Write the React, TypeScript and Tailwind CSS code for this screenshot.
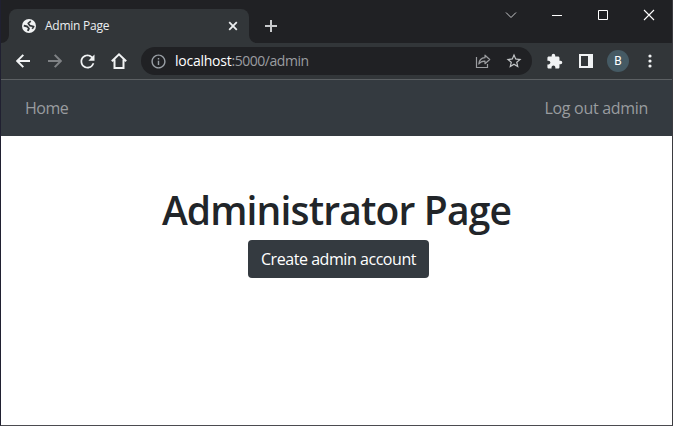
import type { ReactNode } from "react";
import { MdRefresh, MdExtension, MdStarBorder, MdInfoOutline } from "react-icons/md";

function Cell({ children }: { children: ReactNode }) {
  return <div className="flex h-8 w-8 shrink-0 items-center justify-center">{children}</div>;
}

function WindowButton({ children }: { children: ReactNode }) {
  return (
    <button className="flex h-[30px] w-[46px] shrink-0 items-center justify-center">
      <svg width="12" height="12" viewBox="0 0 12 12" fill="none" stroke="currentColor">
        {children}
      </svg>
    </button>
  );
}

function Globe() {
  return (
    <svg width="14" height="14" viewBox="0 0 14 14" fill="none" stroke="#323639">
      <circle cx="7" cy="7" r="7" fill="#f1f3f4" stroke="none" />
      <path d="M8.800 2.200L6.200 4.300l1.600 2.300 3.900.9-1.500 2.300" strokeWidth="1.700" strokeLinejoin="round" />
      <path d="M1.800 6.600l3.400.9 1.700 2-1.100 2.300" strokeWidth="1.900" strokeLinejoin="round" />
    </svg>
  );
}

function TitleBar() {
  return (
    <div className="flex h-[43px] bg-[#202124]">
      <svg className="shrink-0 self-end" width="8" height="8" viewBox="0 0 8 8">
        <path d="M8 0v8H0a8 8 0 0 0 8-8z" fill="#323639" />
      </svg>
      <div className="mt-[9px] flex h-[34px] w-[240px] shrink-0 items-center rounded-t-lg bg-[#323639] pl-[13px] pr-[11px] text-[#eceef0]">
        <Globe />
        <span className="ml-[9px] flex-1 whitespace-nowrap text-[12px] leading-4 tracking-[-0.25px]">Admin Page</span>
        <svg width="10" height="10" viewBox="0 0 10 10" stroke="currentColor" strokeWidth="1.8">
          <path d="M1.200 1.200l7.600 7.600M8.800 1.200L1.200 8.800" />
        </svg>
      </div>
      <svg className="shrink-0 self-end" width="8" height="8" viewBox="0 0 8 8">
        <path d="M0 0v8h8a8 8 0 0 1-8-8z" fill="#323639" />
      </svg>
      <svg className="ml-2 mt-5 shrink-0" width="12" height="12" viewBox="0 0 12 12" stroke="#c8cacc" strokeWidth="2">
        <path d="M6 0v12M0 6h12" />
      </svg>
      <div className="ml-auto flex text-white">
        <WindowButton>
          <path d="M1 3.500l5 5 5-5" stroke="#c8cacc" />
        </WindowButton>
        <WindowButton>
          <path d="M1 6.500h10" />
        </WindowButton>
        <WindowButton>
          <path d="M1.500 1.500h9v9h-9z" />
        </WindowButton>
        <WindowButton>
          <path d="M1 1l10 10M11 1L1 11" strokeWidth="1.1" />
        </WindowButton>
      </div>
    </div>
  );
}

function Toolbar() {
  return (
    <div className="flex h-9 items-center bg-[#323639] px-1.5 text-[#f1f3f4]">
      <Cell>
        <svg width="14" height="14" viewBox="0 0 14 14" fill="none" stroke="currentColor" strokeWidth="2">
          <path d="M14 7H1.600M7.300 .9L1.200 7l6.100 6.100" />
        </svg>
      </Cell>
      <Cell>
        <svg className="text-[#7f8285]" width="14" height="14" viewBox="0 0 14 14" fill="none" stroke="currentColor" strokeWidth="2">
          <path d="M0 7h12.400M6.700 .9L12.800 7l-6.100 6.100" />
        </svg>
      </Cell>
      <Cell><MdRefresh size={21} /></Cell>
      <Cell>
        <svg width="16" height="16" viewBox="0 0 16 16" fill="none" stroke="currentColor" strokeWidth="2">
          <path d="M.8 8.300L8 1.400l7.200 6.900M3.500 6.500V15h9V6.500" />
        </svg>
      </Cell>
      <div className="mx-1.5 flex h-7 flex-1 items-center rounded-full bg-[#202124] pl-[9px] pr-[9px]">
        <MdInfoOutline size={17} className="text-[#9aa0a6]" />
        <span className="ml-2 flex-1 whitespace-nowrap text-[14px] leading-5 tracking-[-0.45px] text-[#9b9da0]">
          <span className="tracking-[-0.25px] text-white">localhost</span>:5000/admin
        </span>
        <svg className="mr-[14px]" width="16" height="16" viewBox="0 0 16 16" fill="none" stroke="#9b9da0" strokeWidth="1.2">
          <path d="M1.500 4v10.500h11V11" />
          <path d="M10 2.200L14.700 6.500 10 10.700V8.200C7.200 8.100 5.200 9 3.800 11c.3-3.700 2.500-6 6.200-6.300z" strokeLinejoin="round" />
        </svg>
        <MdStarBorder size={18} className="text-[#c4c7c9]" />
      </div>
      <Cell><MdExtension size={17} /></Cell>
      <Cell>
        <svg width="14" height="14" viewBox="0 0 14 14">
          <path d="M0 0h14v14H0zM2 2v10h7V2z" fill="currentColor" fillRule="evenodd" />
        </svg>
      </Cell>
      <Cell>
        <span className="flex h-[22px] w-[22px] items-center justify-center rounded-full bg-[#455a64] font-[Roboto] text-[12px] leading-none text-white">B</span>
      </Cell>
      <Cell>
        <svg width="4" height="14" viewBox="0 0 4 14" fill="currentColor">
          <circle cx="2" cy="2" r="1.600" />
          <circle cx="2" cy="7" r="1.600" />
          <circle cx="2" cy="12" r="1.600" />
        </svg>
      </Cell>
    </div>
  );
}

export default function App() {
  return (
    <div className="flex h-[426px] w-[673px] flex-col overflow-hidden border-x border-b border-b-[#4b4b50] border-l-[#202031] border-r-[#3b3b40] bg-white font-['Open_Sans','Noto_Sans',sans-serif]">
      <TitleBar />
      <Toolbar />
      <nav className="flex h-[57px] items-center justify-between border-t border-[#5c6063] bg-[#343a40] px-6 text-[16px] leading-6 text-[#999c9f]">
        <a className="tracking-[-0.5px]">Home</a>
        <a className="tracking-[-0.3px]">Log out admin</a>
      </nav>
      <main className="flex flex-col items-center pt-[50px]">
        <h1 className="whitespace-nowrap text-[39px] font-semibold leading-[48px] tracking-[-0.85px] text-[#212529]">Administrator Page</h1>
        <button className="ml-1 mt-1.5 h-[38px] w-[181px] whitespace-nowrap rounded bg-[#343a40] text-[16px] leading-6 tracking-[-0.45px] text-white">
          Create admin account
        </button>
      </main>
    </div>
  );
}
